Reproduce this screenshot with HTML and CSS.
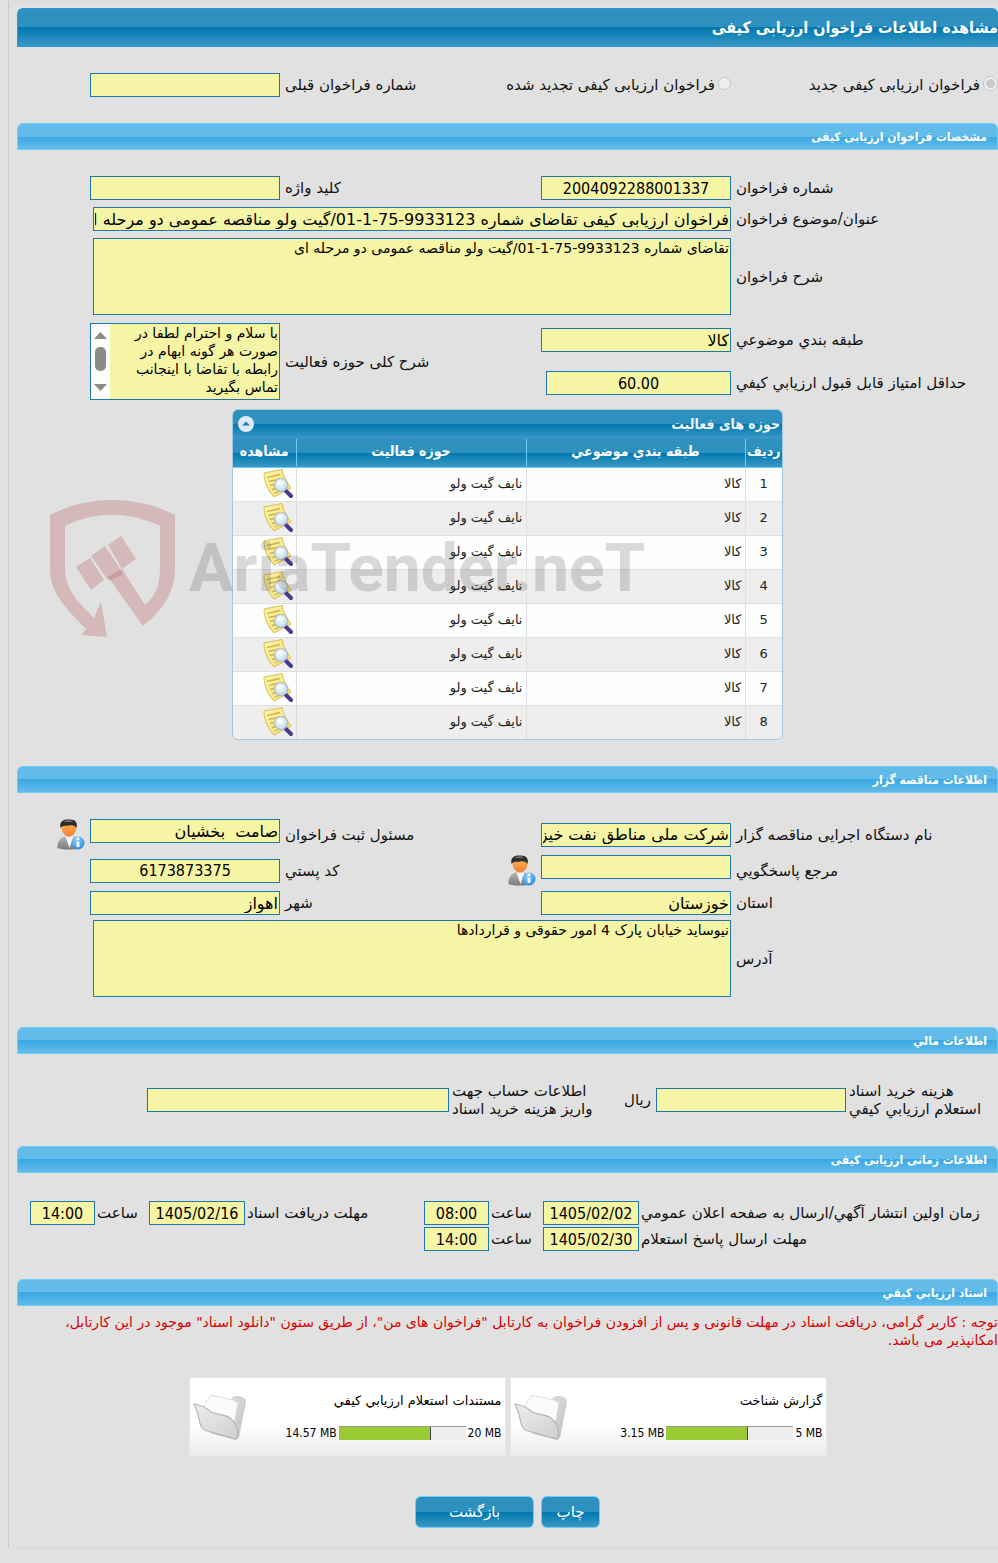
FILE: index.html
```html
<!DOCTYPE html>
<html lang="fa" dir="rtl">
<head>
    <meta charset="UTF-8">
    <meta name="viewport" content="width=device-width, initial-scale=1.0">
    <title>مشاهده اطلاعات فراخوان ارزیابی کیفی</title>
    <link rel="stylesheet" href="styles.css">
</head>
<body>
    <!-- shared icons -->
    <svg class="sprite" width="0" height="0" aria-hidden="true">
        <defs>
            <linearGradient id="paper" x1="0" y1="0" x2="1" y2="1">
                <stop offset="0" stop-color="#fdf6a0"/>
                <stop offset="1" stop-color="#f1dc7a"/>
            </linearGradient>
            <radialGradient id="lens" cx=".4" cy=".35" r=".7">
                <stop offset="0" stop-color="#ffffff"/>
                <stop offset="1" stop-color="#b8d8ec"/>
            </radialGradient>
            <linearGradient id="suit" x1="0" y1="0" x2="0" y2="1">
                <stop offset="0" stop-color="#b5b5b5"/>
                <stop offset="1" stop-color="#7a7a7a"/>
            </linearGradient>
            <linearGradient id="face" x1="0" y1="0" x2="0" y2="1">
                <stop offset="0" stop-color="#ffb04e"/>
                <stop offset="1" stop-color="#f07f3a"/>
            </linearGradient>
            <radialGradient id="badge" cx=".4" cy=".3" r=".8">
                <stop offset="0" stop-color="#8fd0fb"/>
                <stop offset="1" stop-color="#1f83dc"/>
            </radialGradient>
            <linearGradient id="folderBack" x1="0" y1="0" x2="1" y2="1">
                <stop offset="0" stop-color="#e6e6e6"/>
                <stop offset="1" stop-color="#c2c2c2"/>
            </linearGradient>
            <linearGradient id="folderFront" x1="0" y1="0" x2="1" y2="1">
                <stop offset="0" stop-color="#ededed"/>
                <stop offset="1" stop-color="#d0d0d0"/>
            </linearGradient>
        </defs>
        <symbol id="icon-note" viewBox="0 0 30 30">
            <path d="M1 4 19 .5C20 7 24 13 28 19L11 28C5 22 1 13 1 4Z" fill="url(#paper)" stroke="#d9bd5c" stroke-width="1"/>
            <path d="M4 8.500 17 5.500M5.500 12.500 17 10M7 16.500 13 15M9 20.500 13 19.500M11.500 24 18 22" stroke="#cfb45a" stroke-width="1.300" fill="none"/>
            <path d="m23 22 5 5" stroke="#4b3a8c" stroke-width="4" stroke-linecap="round"/>
            <circle cx="18" cy="16" r="6.500" fill="url(#lens)" stroke="#b3bac0" stroke-width="1.200"/>
        </symbol>
        <symbol id="icon-user" viewBox="0 0 28 31">
            <path d="M.5 29C0 22 4 18.500 8 17.500h9c4 1 6 4 6 12C16 31 6 31 .5 29Z" fill="url(#suit)"/>
            <path d="m8.500 17.500 4 11.500 4-11.500Z" fill="#f4f4f4"/>
            <path d="M4.500 8c0-6 15-6 15 0 0 5-3.500 9.500-7.500 9.500S4.500 13 4.500 8Z" fill="url(#face)"/>
            <path d="M3.500 9C2 2 7 0 12 .5c6-.5 9 3 7.500 8.500C18 6.500 15 6 12 6.500 8.500 7 6 6 3.500 9Z" fill="#2d2d2d"/>
            <path d="M6 2.500c3-1.500 8-1.500 11 0-3-.3-7 .8-11 0Z" fill="#8a8a8a"/>
            <circle cx="21" cy="24" r="6.500" fill="url(#badge)"/>
            <path d="M21 18.500v2.500M21 22.500v5.500" stroke="#fff" stroke-width="2.800"/>
        </symbol>
        <symbol id="icon-folder" viewBox="0 0 54 48">
            <path d="M17 12 38 7c1-3 5-4 9-3 4 0 6 3 5 7l-6 31c0 3-3 5-5 4L18 40Z" fill="url(#folderBack)" stroke="#c9c9c9"/>
            <path d="M11 12 18 2l22 5 5 3-5 26-25-5Z" fill="#fbfbfb" stroke="#e0e0e0"/>
            <path d="M1 11c6 1 12 3 17 8 6 3 13 2 19 6 5 4 9 10 7 20l-1 1L14 38c-4-1-6-3-7-8C6 24 4 17 1 11Z" fill="url(#folderFront)" stroke="#b4b4b4" stroke-width="1.200"/>
        </symbol>
    </svg>

    <div class="panel">
        <h1 class="page-title">مشاهده اطلاعات فراخوان ارزیابی کیفی</h1>

        <div class="form-grid">
            <div class="radio">
                <input type="radio" id="typeNew" name="callType" checked disabled>
                <label for="typeNew">فراخوان ارزیابی کیفی جدید</label>
            </div>
            <div class="radio">
                <input type="radio" id="typeRenew" name="callType" disabled>
                <label for="typeRenew">فراخوان ارزیابی کیفی تجدید شده</label>
            </div>
            <label class="label" for="prevNumber">شماره فراخوان قبلی</label>
            <div class="field"><input type="text" id="prevNumber" readonly></div>
        </div>

        <h2 class="section-title">مشخصات فراخوان ارزیابی کیفی</h2>

        <div class="form-grid">
            <label class="label" for="callNumber">شماره فراخوان</label>
            <div class="field"><input class="center" type="text" id="callNumber" value="2004092288001337" readonly></div>
            <label class="label" for="keyword">کلید واژه</label>
            <div class="field"><input type="text" id="keyword" readonly></div>

            <label class="label" for="subject">عنوان/موضوع فراخوان</label>
            <div class="field wide"><input type="text" id="subject" value="فراخوان ارزیابی کیفی تقاضای شماره 9933123-75-1-01/گیت ولو مناقصه عمومی دو مرحله ای" readonly></div>

            <label class="label" for="description">شرح فراخوان</label>
            <div class="field wide"><textarea id="description" readonly>تقاضای شماره 9933123-75-1-01/گیت ولو مناقصه عمومی دو مرحله ای</textarea></div>
        </div>

        <div class="form-grid activity-grid">
            <label class="label" for="category">طبقه بندي موضوعي</label>
            <div class="field"><input type="text" id="category" value="کالا" readonly></div>
            <label class="label tall" for="activity">شرح کلی حوزه فعالیت</label>
            <div class="field tall">
                <div class="scroll-box">
                    <textarea id="activity" readonly>با سلام و احترام لطفا در
صورت هر گونه ابهام در
رابطه با تقاضا با اینجانب
تماس بگیرید</textarea>
                    <svg class="scrollbar" viewBox="0 0 19 75" aria-hidden="true">
                        <path d="M3 15 9.500 8 16 15ZM3 60h13l-6.500 7Z"/>
                        <rect x="4" y="23" width="11" height="24" rx="5"/>
                    </svg>
                </div>
            </div>
            <label class="label" for="minScore">حداقل امتیاز قابل قبول ارزيابي كيفي</label>
            <div class="field"><input class="center short" type="text" id="minScore" value="60.00" readonly></div>
        </div>

        <div class="grid-box">
            <div class="grid-title">
                <span>حوزه های فعالیت</span>
                <button class="collapse" type="button" aria-label="بستن جدول">
                    <svg viewBox="0 0 16 16"><circle cx="8" cy="8" r="8"/><path d="M4 9.500 8 5.500l4 4Z"/></svg>
                </button>
            </div>
            <table>
                <thead>
                    <tr>
                        <th class="col-row">ردیف</th>
                        <th class="col-category">طبقه بندي موضوعي</th>
                        <th>حوزه فعالیت</th>
                        <th class="col-view">مشاهده</th>
                    </tr>
                </thead>
                <tbody>
                    <tr><td>1</td><td>کالا</td><td>نایف گیت ولو</td><td><a href="#" aria-label="مشاهده"><svg class="note"><use href="#icon-note"/></svg></a></td></tr>
                    <tr><td>2</td><td>کالا</td><td>نایف گیت ولو</td><td><a href="#" aria-label="مشاهده"><svg class="note"><use href="#icon-note"/></svg></a></td></tr>
                    <tr><td>3</td><td>کالا</td><td>نایف گیت ولو</td><td><a href="#" aria-label="مشاهده"><svg class="note"><use href="#icon-note"/></svg></a></td></tr>
                    <tr><td>4</td><td>کالا</td><td>نایف گیت ولو</td><td><a href="#" aria-label="مشاهده"><svg class="note"><use href="#icon-note"/></svg></a></td></tr>
                    <tr><td>5</td><td>کالا</td><td>نایف گیت ولو</td><td><a href="#" aria-label="مشاهده"><svg class="note"><use href="#icon-note"/></svg></a></td></tr>
                    <tr><td>6</td><td>کالا</td><td>نایف گیت ولو</td><td><a href="#" aria-label="مشاهده"><svg class="note"><use href="#icon-note"/></svg></a></td></tr>
                    <tr><td>7</td><td>کالا</td><td>نایف گیت ولو</td><td><a href="#" aria-label="مشاهده"><svg class="note"><use href="#icon-note"/></svg></a></td></tr>
                    <tr><td>8</td><td>کالا</td><td>نایف گیت ولو</td><td><a href="#" aria-label="مشاهده"><svg class="note"><use href="#icon-note"/></svg></a></td></tr>
                </tbody>
            </table>
        </div>

        <h2 class="section-title">اطلاعات مناقصه گزار</h2>

        <div class="form-grid org-grid">
            <label class="label" for="orgName">نام دستگاه اجرایی مناقصه گزار</label>
            <div class="field"><input type="text" id="orgName" value="شرکت ملی مناطق نفت خیز جنوب" readonly></div>
            <label class="label" for="registrar">مسئول ثبت فراخوان</label>
            <div class="field with-icon">
                <input type="text" id="registrar" value="صامت  بخشیان" readonly>
                <button class="user" type="button" aria-label="اطلاعات مسئول"><svg><use href="#icon-user"/></svg></button>
            </div>

            <label class="label" for="contact">مرجع پاسخگويي</label>
            <div class="field with-icon">
                <input type="text" id="contact" readonly>
                <button class="user" type="button" aria-label="اطلاعات مرجع"><svg><use href="#icon-user"/></svg></button>
            </div>
            <label class="label" for="postal">کد پستي</label>
            <div class="field"><input class="center" type="text" id="postal" value="6173873375" readonly></div>

            <label class="label" for="province">استان</label>
            <div class="field"><input type="text" id="province" value="خوزستان" readonly></div>
            <label class="label" for="city">شهر</label>
            <div class="field"><input type="text" id="city" value="اهواز" readonly></div>

            <label class="label" for="address">آدرس</label>
            <div class="field wide"><textarea id="address" readonly>نیوساید خیابان پارک 4 امور حقوقی و قراردادها</textarea></div>
        </div>

        <h2 class="section-title">اطلاعات مالي</h2>

        <div class="finance-grid">
            <label class="label" for="docPrice">هزینه خرید اسناد<br>استعلام ارزيابي كيفي</label>
            <div class="price">
                <input type="text" id="docPrice" readonly>
                <span>ریال</span>
            </div>
            <label class="label" for="account">اطلاعات حساب جهت<br>واریز هزینه خرید اسناد</label>
            <input type="text" id="account" readonly>
        </div>

        <h2 class="section-title">اطلاعات زمانی ارزیابی کیفی</h2>

        <div class="time-grid">
            <label class="label" for="publishDate">زمان اولین انتشار آگهي/ارسال به صفحه اعلان عمومي</label>
            <input class="center" type="text" id="publishDate" value="1405/02/02" readonly>
            <label class="label" for="publishTime">ساعت</label>
            <input class="center" type="text" id="publishTime" value="08:00" readonly>
            <label class="label" for="receiveDate">مهلت دریافت اسناد</label>
            <input class="center" type="text" id="receiveDate" value="1405/02/16" readonly>
            <label class="label" for="receiveTime">ساعت</label>
            <input class="center" type="text" id="receiveTime" value="14:00" readonly>

            <label class="label" for="replyDate">مهلت ارسال پاسخ استعلام</label>
            <input class="center" type="text" id="replyDate" value="1405/02/30" readonly>
            <label class="label" for="replyTime">ساعت</label>
            <input class="center" type="text" id="replyTime" value="14:00" readonly>
        </div>

        <h2 class="section-title">اسناد ارزيابي كيفي</h2>

        <p class="notice">توجه : کاربر گرامی، دریافت اسناد در مهلت قانونی و پس از افزودن فراخوان به کارتابل "فراخوان های من"، از طریق ستون "دانلود اسناد" موجود در این کارتابل، امکانپذیر می باشد.</p>

        <div class="documents">
            <div class="document">
                <div class="document-info">
                    <div>گزارش شناخت</div>
                    <div class="usage">
                        <span dir="ltr">5 MB</span>
                        <div class="bar"><div class="bar-fill" style="width: 64%"></div></div>
                        <span dir="ltr">3.15 MB</span>
                    </div>
                </div>
                <svg class="folder"><use href="#icon-folder"/></svg>
            </div>
            <div class="document">
                <div class="document-info">
                    <div>مستندات استعلام ارزيابي كيفي</div>
                    <div class="usage">
                        <span dir="ltr">20 MB</span>
                        <div class="bar"><div class="bar-fill" style="width: 73%"></div></div>
                        <span dir="ltr">14.57 MB</span>
                    </div>
                </div>
                <svg class="folder"><use href="#icon-folder"/></svg>
            </div>
        </div>

        <div class="actions">
            <button class="btn" type="button">چاپ</button>
            <button class="btn btn-back" type="button">بازگشت</button>
        </div>
    </div>

    <!-- site watermark -->
    <div class="watermark" dir="ltr" aria-hidden="true">
        <svg viewBox="0 0 125 138">
            <path d="M0 15C38-5 87-5 125 15V68C125 92 113 110 93 126L58 77 72 69 95 105C106 96 110 84 110 68V26C80 11 44 11 15 26V68C15 92 31 104 44 118L51 102 57 137 31 135 36 129C18 110 0 94 0 70Z"/>
            <path d="M26 67 40 58 54 80 41 90ZM41 56 55 46 71 70 72 75 60 80 57 79ZM58 45 71 36 86 59 72 69Z"/>
        </svg>
        <span>AriaTender.neT</span>
    </div>
</body>
</html>
```

FILE: styles.css
```css
:root {
    --page-color: #e1e1e1;
    --field-color: #f6f4a5;
    --field-border: #1f78ab;
    --bar-dark: linear-gradient(#2e90bf 0 50%, #0077b0 50%, #3a98c4);
    --bar-light: linear-gradient(#63bbea 0 50%, #3aa8e3 50%, #63bbea);
    --narrow-font: "DejaVu Sans Condensed", "DejaVu Sans", sans-serif;
}

* {
    box-sizing: border-box;
}

body {
    margin: 0;
    padding: 1px 0 15px 8px;
    background-color: var(--page-color);
    color: #111;
    font-family: "DejaVu Sans", sans-serif;
    font-size: 15px;
    line-height: 18px;
    position: relative;
}

.sprite {
    position: absolute;
}

.panel {
    padding: 6px 0 19px 8px;
    border: 1px solid #d9d9d9;
    border-left-color: #c9c9c9;
    border-width: 1px 0 1px 1px;
}

.page-title,
.section-title {
    margin: 0;
    color: #fff;
    border: 1px solid #6cccf5;
    border-radius: 6px 6px 0 0;
    font-family: var(--narrow-font);
}

.page-title {
    height: 39px;
    font-size: 16px;
    line-height: 37px;
    background: var(--bar-dark);
    border-color: #2b95e0;
    border-right: 0;
}

.section-title {
    height: 27px;
    padding: 0 10px;
    font-size: 12px;
    line-height: 27px;
    background: var(--bar-light);
}

input[type="text"],
textarea {
    width: 190px;
    height: 24px;
    margin: 0;
    padding: 0 1px;
    border: 1px solid var(--field-border);
    border-radius: 0;
    outline: none;
    background-color: var(--field-color);
    color: #000;
    font-family: inherit;
    font-size: 16px;
}

textarea {
    display: block;
    height: 77px;
    font-size: 14px;
    line-height: 18px;
    resize: none;
    overflow: hidden;
}

input[type="text"].center {
    font-family: var(--narrow-font);
    text-align: center;
}

input[type="text"].short {
    width: 185px;
}

/* label, field, label, field */
.form-grid {
    display: grid;
    grid-template-columns: 262fr 224px 217fr 224px;
    gap: 7px 5px;
    align-items: center;
    padding: 26px 0 26px 39px;
}

.label {
    text-align: left;
}

.field {
    display: flex;
}

.wide {
    grid-column: 2 / 5;
    padding-left: 37px;
}

.wide input[type="text"],
.wide textarea {
    width: 100%;
}

.with-icon {
    gap: 5px;
}

.radio {
    display: flex;
    gap: 3px;
    white-space: nowrap;
}

.radio input {
    width: 15px;
    height: 15px;
    margin: 0;
}

.user {
    padding: 0;
    border: 0;
    background: none;
    cursor: pointer;
}

.user svg {
    display: block;
    width: 28px;
    height: 31px;
}

.activity-grid {
    row-gap: 9px;
    margin-top: -18px;
    padding-top: 0;
    padding-bottom: 0;
}

.tall {
    grid-row: span 2;
}

.scroll-box {
    display: flex;
    width: 190px;
    height: 77px;
    border: 1px solid var(--field-border);
}

.scroll-box textarea {
    flex: 1;
    width: 0;
    height: 75px;
    border: 0;
    white-space: pre;
}

.scrollbar {
    width: 19px;
    background: #fcfcfc;
    fill: #8b8b8b;
}

.grid-box {
    width: 551px;
    margin: 9px auto 26px;
    border: 1px solid #a5c8de;
    border-radius: 6px;
    overflow: hidden;
}

.grid-title {
    display: flex;
    justify-content: space-between;
    align-items: center;
    height: 29px;
    padding: 0 2px 0 5px;
    background: var(--bar-dark);
    border-bottom: 1px solid #3b93d6;
    color: #f0f6fa;
    font-family: var(--narrow-font);
    font-size: 14px;
    font-weight: bold;
}

.collapse {
    padding: 0;
    border: 0;
    background: none;
    cursor: pointer;
}

.collapse svg {
    display: block;
    width: 16px;
    height: 16px;
    fill: #dfe9f5;
}

.collapse path {
    fill: #1d7fb5;
}

table {
    width: 100%;
    border-collapse: collapse;
    table-layout: fixed;
}

th {
    height: 28px;
    padding: 0 0 4px;
    background: var(--bar-dark);
    border-left: 1px solid #6cccf5;
    border-bottom: 1px solid #6cccf5;
    color: #fff;
    font-family: var(--narrow-font);
    font-size: 14px;
}

.col-row {
    width: 37px;
}

.col-category {
    width: 219px;
}

.col-view {
    width: 63px;
}

td {
    height: 34px;
    padding: 0 3px;
    border-left: 1px solid #dedede;
    border-bottom: 1px solid #dedede;
    background-color: #fdfefe;
    color: #222;
    font-size: 13px;
}

th:last-child,
td:last-child {
    border-left: 0;
}

td:first-child {
    text-align: center;
}

tr:nth-child(even) td {
    background-color: #eee;
}

tr:last-child td {
    border-bottom: 0;
}

.note {
    display: block;
    width: 30px;
    height: 30px;
}

.org-grid {
    row-gap: 5px;
    padding-bottom: 30px;
}

.finance-grid {
    display: grid;
    grid-template-columns: 149px 220px 1fr 302px;
    column-gap: 3px;
    align-items: center;
    padding: 28px 0 28px 130px;
}

.finance-grid #account {
    width: 100%;
}

.price {
    display: flex;
    align-items: center;
    gap: 5px;
}

/* date and hour pairs */
.time-grid {
    display: grid;
    grid-template-columns: 51fr 96px 50px 65px 25fr 96px 50px 65px;
    gap: 2px;
    align-items: center;
    padding: 28px 0 28px 13px;
}

.time-grid input[type="text"] {
    width: 100%;
}

.notice {
    margin: 7px 0 28px;
    color: #d90000;
    font-size: 14px;
}

.documents {
    display: flex;
    justify-content: center;
    gap: 4px;
}

.document {
    display: flex;
    justify-content: space-between;
    align-items: center;
    width: 317px;
    height: 79px;
    padding: 0 3px;
    border: 1px solid #e8e8e8;
    background: linear-gradient(#fff 60%, #ececec);
    color: #000;
    font-size: 13px;
}

.document-info {
    display: grid;
    gap: 14px;
}

.usage {
    display: flex;
    align-items: center;
    gap: 2px;
    font-family: var(--narrow-font);
    font-size: 12px;
}

.bar {
    width: 127px;
    height: 14px;
    border-top: 1px solid #999;
    background-color: #eee;
    direction: ltr;
}

.bar-fill {
    height: 100%;
    background-color: #9acb34;
    border-right: 1px solid #444;
}

.folder {
    width: 54px;
    height: 48px;
}

.actions {
    display: flex;
    justify-content: center;
    gap: 7px;
    margin-top: 40px;
}

.btn {
    min-width: 59px;
    height: 32px;
    border: 1px solid #6cccf5;
    border-radius: 6px;
    background: var(--bar-dark);
    color: #fff;
    font-family: inherit;
    font-size: 15px;
    cursor: pointer;
}

.btn-back {
    min-width: 119px;
}

.watermark {
    position: absolute;
    top: 500px;
    left: 50px;
    display: flex;
    align-items: center;
    gap: 14px;
    color: rgba(70, 70, 70, 0.2);
    font-family: Roboto, sans-serif;
    font-size: 66px;
    font-weight: bold;
    line-height: 138px;
    pointer-events: none;
}

.watermark svg {
    width: 125px;
    height: 138px;
    fill: rgba(177, 65, 73, 0.25);
}
```
